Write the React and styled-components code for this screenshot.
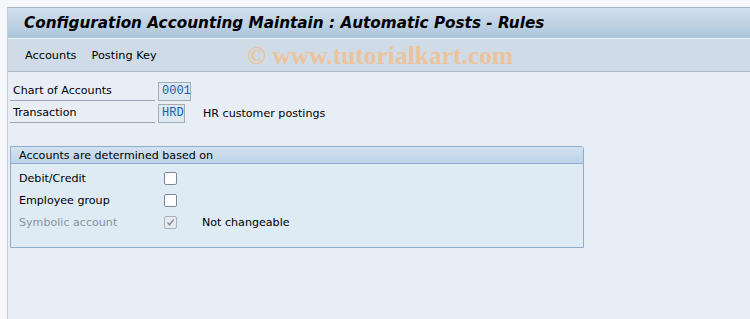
import React from "react";
import styled, { createGlobalStyle } from "styled-components";

const Global = createGlobalStyle`
  html, body { margin: 0; padding: 0; }
  body { width: 750px; height: 319px; overflow: hidden; background: #f4f6fa; font-family: "DejaVu Sans", Tahoma, sans-serif; }
`;

const Frame = styled.div`
  width: 750px;
  height: 319px;
  display: flex;
  flex-direction: column;
  padding-top: 7px;
  box-sizing: border-box;
`;

const Shell = styled.div`
  flex: 1;
  margin-left: 7px;
  display: flex;
  flex-direction: column;
  border-top: 1px solid #aab3c3;
  border-left: 1px solid #c5ccd8;
  background: #e8eef6;
`;

const TitleBar = styled.div`
  height: 30px;
  display: flex;
  align-items: center;
  padding-left: 16px;
  background: linear-gradient(#d4e1ee, #abc4da);
  border-bottom: 1px solid #eef3f8;
`;

const Title = styled.h1`
  margin: 0;
  font-family: "DejaVu Sans", Tahoma, sans-serif;
  font-size: 15.25px;
  font-weight: bold;
  font-style: italic;
  color: #000;
`;

const MenuBar = styled.div`
  height: 32px;
  display: flex;
  align-items: center;
  background: #cfdce7;
  border-bottom: 1px solid #a9b5c6;
  padding-left: 17px;
  gap: 15px;
  position: relative;
`;

const MenuItem = styled.span`
  font-size: 11.3px;
  color: #000;
`;

const Watermark = styled.span`
  position: absolute;
  left: 239px;
  top: 2px;
  font-family: "Liberation Serif", "DejaVu Serif", serif;
  font-weight: bold;
  font-size: 25.5px;
  color: #ecc39c;
`;

const Content = styled.div`
  padding: 8px 0 0 2px;
  display: flex;
  flex-direction: column;
`;

const FieldRow = styled.div`
  display: flex;
  align-items: center;
  height: 22px;
`;

const Label = styled.div`
  width: 145px;
  height: 20px;
  box-sizing: border-box;
  padding-left: 3px;
  display: flex;
  align-items: center;
  font-size: 11.1px;
  color: #000;
  border-bottom: 1px solid #9aa6b6;
`;

const InputBox = styled.div`
  margin-left: 3px;
  width: ${(p) => p.$w}px;
  height: 19px;
  box-sizing: border-box;
  border: 1px solid #a4acb6;
  background: #dde8f2;
  display: flex;
  align-items: center;
  padding-left: 3px;
  font-family: "Liberation Mono", "DejaVu Sans Mono", monospace;
  font-size: 12px;
  color: #1d5ea8;
`;

const Desc = styled.span`
  margin-left: ${(p) => p.$ml}px;
  font-size: 11.1px;
  color: #000;
`;

const Group = styled.div`
  margin-top: 22px;
  width: 574px;
  height: 102px;
  box-sizing: border-box;
  border: 1px solid #8faccb;
  background: #deeaf4;
  border-top-right-radius: 3px;
`;

const GroupHead = styled.div`
  height: 17px;
  box-sizing: border-box;
  display: flex;
  align-items: center;
  padding-left: 8px;
  background: linear-gradient(#d3e2f1, #bcd3e8);
  border-bottom: 1px solid #8fa9c6;
  font-size: 11.1px;
  color: #000;
`;

const GroupBody = styled.div`
  padding-top: 3px;
  display: flex;
  flex-direction: column;
`;

const CheckRow = styled.div`
  display: flex;
  align-items: center;
  height: 22px;
  padding-left: 8px;
`;

const CheckLabel = styled.span`
  width: 145px;
  font-size: 11.1px;
  color: ${(p) => (p.$disabled ? "#8c9299" : "#000")};
`;

const Box = styled.span`
  width: 13px;
  height: 13px;
  box-sizing: border-box;
  border: 1px solid ${(p) => (p.$disabled ? "#a9b0b8" : "#7d8794")};
  background: ${(p) => (p.$disabled ? "#e6ebf0" : "#fff")};
  border-radius: 2px;
  display: flex;
  align-items: center;
  justify-content: center;
`;

const Checkbox = ({ checked, disabled }) => (
  <Box $disabled={disabled}>
    {checked && (
      <svg width="9" height="9" viewBox="0 0 9 9">
        <path d="M1.5 4.5 L3.5 6.8 L7.8 1.5" fill="none" stroke="#8a9099" strokeWidth="1.4" />
      </svg>
    )}
  </Box>
);

export default function App() {
  return (
    <>
      <Global />
      <Frame>
        <Shell>
          <TitleBar>
            <Title>Configuration Accounting Maintain : Automatic Posts - Rules</Title>
          </TitleBar>
          <MenuBar>
            <MenuItem>Accounts</MenuItem>
            <MenuItem>Posting Key</MenuItem>
            <Watermark>© www.tutorialkart.com</Watermark>
          </MenuBar>
          <Content>
            <FieldRow>
              <Label>Chart of Accounts</Label>
              <InputBox $w={33}>0001</InputBox>
            </FieldRow>
            <FieldRow>
              <Label>Transaction</Label>
              <InputBox $w={27}>HRD</InputBox>
              <Desc $ml={18}>HR customer postings</Desc>
            </FieldRow>
            <Group>
              <GroupHead>Accounts are determined based on</GroupHead>
              <GroupBody>
                <CheckRow>
                  <CheckLabel>Debit/Credit</CheckLabel>
                  <Checkbox />
                </CheckRow>
                <CheckRow>
                  <CheckLabel>Employee group</CheckLabel>
                  <Checkbox />
                </CheckRow>
                <CheckRow>
                  <CheckLabel $disabled>Symbolic account</CheckLabel>
                  <Checkbox checked disabled />
                  <Desc $ml={25}>Not changeable</Desc>
                </CheckRow>
              </GroupBody>
            </Group>
          </Content>
        </Shell>
      </Frame>
    </>
  );
}
